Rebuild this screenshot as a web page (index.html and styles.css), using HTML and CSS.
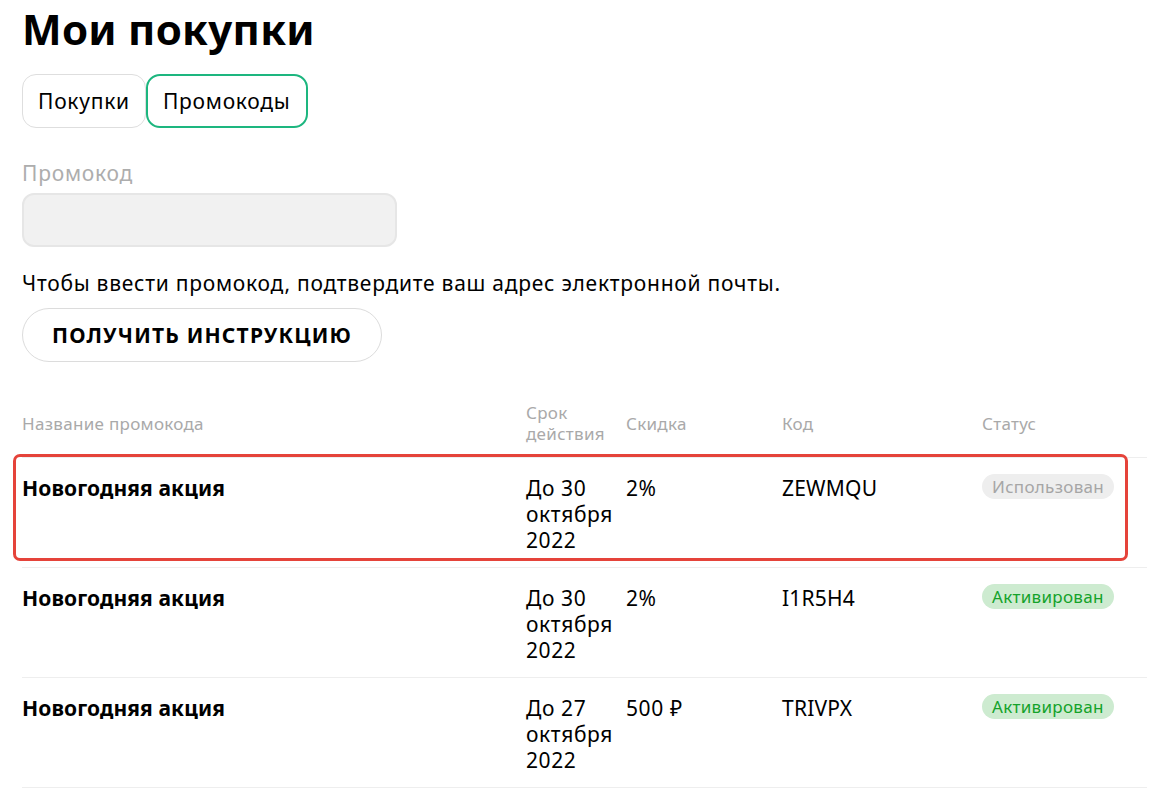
FILE: index.html
```html
<!DOCTYPE html>
<html lang="ru">
<head>
<meta charset="utf-8">
<title>Мои покупки</title>
<link rel="stylesheet" href="styles.css">
</head>
<body>
<main class="page">
  <h1 class="title">Мои покупки</h1>
  <div class="tabs">
    <button class="tab">Покупки</button>
    <button class="tab tab-active">Промокоды</button>
  </div>
  <label class="field-label" for="promo">Промокод</label>
  <input class="field" id="promo" type="text" disabled>
  <p class="note">Чтобы ввести промокод, подтвердите ваш адрес электронной почты.</p>
  <button class="btn">ПОЛУЧИТЬ ИНСТРУКЦИЮ</button>

  <div class="table">
    <div class="row head">
      <div class="cell">Название промокода</div>
      <div class="cell">Срок действия</div>
      <div class="cell">Скидка</div>
      <div class="cell">Код</div>
      <div class="cell">Статус</div>
    </div>
    <div class="row item">
      <div class="cell name">Новогодняя акция</div>
      <div class="cell">До 30 октября 2022</div>
      <div class="cell">2%</div>
      <div class="cell code">ZEWMQU</div>
      <div class="cell"><span class="badge badge-used">Использован</span></div>
      <div class="highlight"></div>
    </div>
    <div class="row item">
      <div class="cell name">Новогодняя акция</div>
      <div class="cell">До 30 октября 2022</div>
      <div class="cell">2%</div>
      <div class="cell code">I1R5H4</div>
      <div class="cell"><span class="badge badge-active">Активирован</span></div>
    </div>
    <div class="row item">
      <div class="cell name">Новогодняя акция</div>
      <div class="cell">До 27 октября 2022</div>
      <div class="cell">500 ₽</div>
      <div class="cell code">TRIVPX</div>
      <div class="cell"><span class="badge badge-active">Активирован</span></div>
    </div>
  </div>
</main>
</body>
</html>
```

FILE: styles.css
```css
* { box-sizing: border-box; }
html, body { margin: 0; padding: 0; background: #fff; }
body {
  font-family: "Noto Sans", "DejaVu Sans", sans-serif;
  color: #000;
}
.page {
  padding: 4px 11px 0 22px;
  display: flex;
  flex-direction: column;
  align-items: flex-start;
}
.title {
  margin: 0;
  font-size: 42px;
  line-height: 50px;
  font-weight: 700;
  letter-spacing: 0.3px;
}
.tabs {
  display: flex;
  margin-top: 20px;
}
.tab {
  font-family: inherit;
  font-size: 21px;
  letter-spacing: 0.75px;
  color: #000;
  background: #fff;
  height: 54px;
  padding: 0 15px;
  border: 1px solid #dedede;
  border-radius: 14px;
}
.tab-active {
  border: 2px solid #1db67f;
}
.field-label {
  margin-top: 33px;
  font-size: 21px;
  letter-spacing: 0.75px;
  line-height: 24px;
  color: #adadad;
}
.field {
  margin-top: 8px;
  width: 375px;
  height: 54px;
  background: #f1f1f1;
  border: 2px solid #e6e6e6;
  border-radius: 12px;
}
.note {
  margin: 24px 0 0;
  font-size: 21px;
  letter-spacing: 0.75px;
  line-height: 24px;
}
.btn {
  margin-top: 13px;
  font-family: inherit;
  font-size: 21px;
  letter-spacing: 1.2px;
  font-weight: 700;
  color: #000;
  background: #fff;
  height: 54px;
  padding: 0 29px;
  border: 1px solid #dcdcdc;
  border-radius: 27px;
}
.table {
  margin-top: 40px;
  width: 1125px;
}
.row {
  display: grid;
  grid-template-columns: 504px 100px 156px 200px 1fr;
  border-bottom: 1px solid #eeeeee;
}
.head {
  align-items: center;
  padding-bottom: 13px;
  font-size: 17px;
  letter-spacing: 0.3px;
  line-height: 21px;
  color: #a9a9a9;
}
.item {
  position: relative;
  height: 110px;
  padding-top: 17px;
  font-size: 21px;
  letter-spacing: 0.6px;
  line-height: 26px;
  align-items: start;
}
.name { font-weight: 700; letter-spacing: 0.1px; }
.code { letter-spacing: 0.2px; }
.badge {
  display: inline-block;
  height: 25px;
  line-height: 25px;
  padding: 0 10px;
  border-radius: 13px;
  font-size: 17px;
  letter-spacing: 0.3px;
  margin-top: -1px;
  vertical-align: top;
}
.badge-used { background: #eeeeee; color: #a6a6a6; }
.badge-active { background: #cdebd0; color: #14a22a; }
.highlight {
  position: absolute;
  top: -4px;
  left: -9px;
  right: 19px;
  bottom: 6px;
  border: 3px solid #e5433a;
  border-radius: 7px;
  pointer-events: none;
}
```
